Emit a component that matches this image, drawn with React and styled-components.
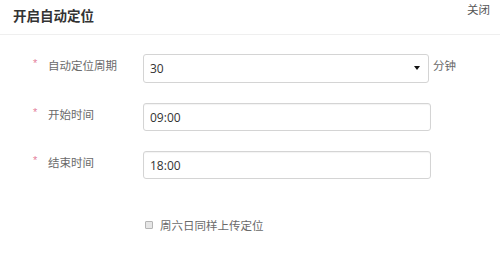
import React, { useState } from "react";
import styled, { createGlobalStyle } from "styled-components";

const GlobalStyle = createGlobalStyle`
  html, body {
    margin: 0;
    padding: 0;
    background: #fff;
  }
  body {
    font-family: "Open Sans", "Noto Sans CJK SC", sans-serif;
  }
`;

const Panel = styled.div`
  width: 500px;
  height: 258px;
  background: #fff;
  overflow: hidden;
`;

const Header = styled.div`
  height: 34px;
  border-bottom: 1px solid #efefef;
  display: flex;
  justify-content: space-between;
  align-items: flex-start;
  padding: 0 10px 0 13px;
`;

const Title = styled.h3`
  margin: 0;
  font-family: "Noto Sans CJK SC", sans-serif;
  font-size: 13.5px;
  font-weight: bold;
  line-height: 30px;
  color: #333;
`;

const Close = styled.a`
  font-family: "Noto Sans CJK SC", sans-serif;
  font-size: 11.5px;
  line-height: 18px;
  color: #555;
  cursor: pointer;
`;

const Form = styled.form`
  padding-top: 19px;
`;

const Row = styled.div`
  display: flex;
  align-items: flex-start;
  margin-bottom: ${(p) => p.gap || 20}px;
`;

const Label = styled.label`
  width: 143px;
  box-sizing: border-box;
  padding-left: 33px;
  display: flex;
  font-family: "Noto Sans CJK SC", sans-serif;
  font-size: 11.5px;
  line-height: 22px;
  color: #6a6a6a;
`;

const Star = styled.span`
  width: 15px;
  color: #e4819b;
  font-family: "Liberation Sans", sans-serif;
  font-size: 11px;
  line-height: 18px;
`;

const SelectWrap = styled.div`
  position: relative;
  width: 286px;
  height: 29px;
`;

const Select = styled.select`
  appearance: none;
  width: 100%;
  height: 100%;
  box-sizing: border-box;
  border: 1px solid #d4d4d4;
  border-radius: 3px;
  background: #fff;
  padding: 0 6px;
  font-family: "Open Sans", sans-serif;
  font-size: 12px;
  color: #333;
  outline: none;
`;

const Caret = styled.span`
  position: absolute;
  right: 9px;
  top: 12px;
  width: 0;
  height: 0;
  border-left: 3px solid transparent;
  border-right: 3px solid transparent;
  border-top: 4px solid #111;
  pointer-events: none;
`;

const Unit = styled.span`
  margin-left: 4px;
  font-family: "Noto Sans CJK SC", sans-serif;
  font-size: 11.5px;
  line-height: 22px;
  color: #6a6a6a;
`;

const Input = styled.input`
  width: 288px;
  height: 28px;
  box-sizing: border-box;
  border: 1px solid #d4d4d4;
  border-radius: 3px;
  box-shadow: inset 0 1px 1px rgba(0, 0, 0, 0.05);
  padding: 0 6px;
  font-family: "Open Sans", sans-serif;
  font-size: 12px;
  color: #333;
  outline: none;
`;

const CheckRow = styled.label`
  display: flex;
  align-items: center;
  margin-left: 145px;
  font-family: "Noto Sans CJK SC", sans-serif;
  font-size: 11.5px;
  line-height: 16px;
  color: #6a6a6a;
`;

const Check = styled.input`
  appearance: none;
  margin: 0 7px 0 0;
  width: 8px;
  height: 8px;
  border: 1px solid #b5b5b5;
  border-radius: 1px;
  background: #e6e6e6;
`;

const App = () => {
  const [period, setPeriod] = useState("30");
  const [start, setStart] = useState("09:00");
  const [end, setEnd] = useState("18:00");
  const [weekend, setWeekend] = useState(false);

  return (
    <Panel>
      <GlobalStyle />
      <Header>
        <Title>开启自动定位</Title>
        <Close>关闭</Close>
      </Header>
      <Form onSubmit={(e) => e.preventDefault()}>
        <Row>
          <Label>
            <Star>*</Star>自动定位周期
          </Label>
          <SelectWrap>
            <Select value={period} onChange={(e) => setPeriod(e.target.value)}>
              <option value="10">10</option>
              <option value="30">30</option>
              <option value="60">60</option>
            </Select>
            <Caret />
          </SelectWrap>
          <Unit>分钟</Unit>
        </Row>
        <Row gap={20}>
          <Label>
            <Star>*</Star>开始时间
          </Label>
          <Input value={start} onChange={(e) => setStart(e.target.value)} />
        </Row>
        <Row gap={38}>
          <Label>
            <Star>*</Star>结束时间
          </Label>
          <Input value={end} onChange={(e) => setEnd(e.target.value)} />
        </Row>
        <CheckRow>
          <Check
            type="checkbox"
            checked={weekend}
            onChange={(e) => setWeekend(e.target.checked)}
          />
          周六日同样上传定位
        </CheckRow>
      </Form>
    </Panel>
  );
};

export default App;
